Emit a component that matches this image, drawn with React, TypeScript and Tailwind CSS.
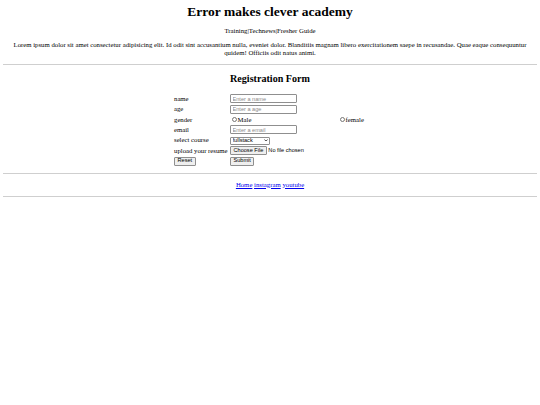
import { useState } from 'react'

const serif = "font-['Liberation_Serif','Times_New_Roman',serif]"
const sans = "font-['Liberation_Sans',Arial,sans-serif]"

function TextField({ placeholder }: { placeholder: string }) {
  return (
    <input
      type="text"
      placeholder={placeholder}
      className={`${sans} h-[9px] w-[67px] rounded-[1px] border-[0.6px] border-[#8f8f8f] bg-white px-[1.5px] text-[5.6px] leading-none text-black outline-none placeholder:text-[#8a8a8a]`}
    />
  )
}

function Radio({ label, name, checked, onChange }: { label: string; name: string; checked: boolean; onChange: () => void }) {
  return (
    <label className="flex items-center gap-[1px]">
      <span
        onClick={onChange}
        className="flex h-[4.6px] w-[4.6px] items-center justify-center rounded-full border-[0.6px] border-[#767676] bg-white"
      >
        {checked && <span className="h-[2px] w-[2px] rounded-full bg-[#0075ff]" />}
      </span>
      <input type="radio" name={name} checked={checked} onChange={onChange} className="hidden" />
      <span>{label}</span>
    </label>
  )
}

function SmallButton({ children }: { children: React.ReactNode }) {
  return (
    <button
      className={`${sans} h-[8.6px] rounded-[1px] border-[0.6px] border-[#8f8f8f] bg-[#efefef] px-[2.5px] text-[5.6px] leading-none text-black`}
    >
      {children}
    </button>
  )
}

export default function App() {
  const [gender, setGender] = useState('')
  const [course, setCourse] = useState('fullstack')

  return (
    <div className={`${serif} min-h-[405px] bg-white px-[3px] text-[6.75px] leading-[7.8px] text-black`}>
      {/* Header */}
      <h1 className="pt-[4px] text-center text-[13.5px] font-bold leading-[15.5px]">Error makes clever academy</h1>
      <p className="mt-[7.5px] text-center">Training|Technews|Fresher Guide</p>
      <p className="mt-[6.5px] px-[8px] text-center">
        Lorem ipsum dolor sit amet consectetur adipisicing elit. Id odit sint accusantium nulla, eveniet dolor. Blanditiis
        magnam libero exercitationem saepe in recusandae. Quae eaque consequuntur quidem! Officiis odit natus animi.
      </p>
      <hr className="mt-[7px] border-t border-[#cfcfcf]" />

      {/* Form */}
      <h2 className="mt-[8px] text-center text-[10.1px] font-bold leading-[11.6px]">Registration Form</h2>
      <div className="mt-[9px] flex justify-center">
        <div className="grid grid-cols-[56px_110px_26px] auto-rows-[10.4px] items-center">
          <span>name</span>
          <TextField placeholder="Enter a name" />
          <span />

          <span>age</span>
          <TextField placeholder="Enter a age" />
          <span />

          <span>gender</span>
          <div className="pl-[2px]">
            <Radio label="Male" name="gender" checked={gender === 'male'} onChange={() => setGender('male')} />
          </div>
          <Radio label="female" name="gender" checked={gender === 'female'} onChange={() => setGender('female')} />

          <span>email</span>
          <TextField placeholder="Enter a email" />
          <span />

          <span>select course</span>
          <div className="relative h-[8px] w-[40px]">
            <select
              value={course}
              onChange={(e) => setCourse(e.target.value)}
              className={`${sans} h-[8px] w-[40px] appearance-none rounded-[1px] border-[0.6px] border-[#8f8f8f] bg-white pl-[1.5px] text-[5.6px] leading-none text-black outline-none`}
            >
              <option value="fullstack">fullstack</option>
              <option value="frontend">frontend</option>
              <option value="backend">backend</option>
            </select>
            <svg
              viewBox="0 0 10 6"
              className="pointer-events-none absolute right-[2.5px] top-[2.6px] h-[2.6px] w-[4px]"
            >
              <path d="M1 1l4 4 4-4" fill="none" stroke="#000" strokeWidth="1.8" />
            </svg>
          </div>
          <span />

          <span className="whitespace-nowrap">upload your resume</span>
          <div className={`${sans} flex items-center gap-[1.5px] text-[5.6px]`}>
            <SmallButton>Choose File</SmallButton>
            <span>No file chosen</span>
          </div>
          <span />

          <div>
            <SmallButton>Reset</SmallButton>
          </div>
          <div>
            <SmallButton>Submit</SmallButton>
          </div>
          <span />
        </div>
      </div>

      {/* Footer */}
      <hr className="mt-[7px] border-t border-[#cfcfcf]" />
      <div className="mt-[6.5px] flex justify-center gap-[1.7px]">
        <a href="#" className="text-[#0000ee] underline">Home</a>
        <a href="#" className="text-[#0000ee] underline">instagram</a>
        <a href="#" className="text-[#0000ee] underline">youtube</a>
      </div>
      <hr className="mt-[7px] border-t border-[#cfcfcf]" />
    </div>
  )
}
